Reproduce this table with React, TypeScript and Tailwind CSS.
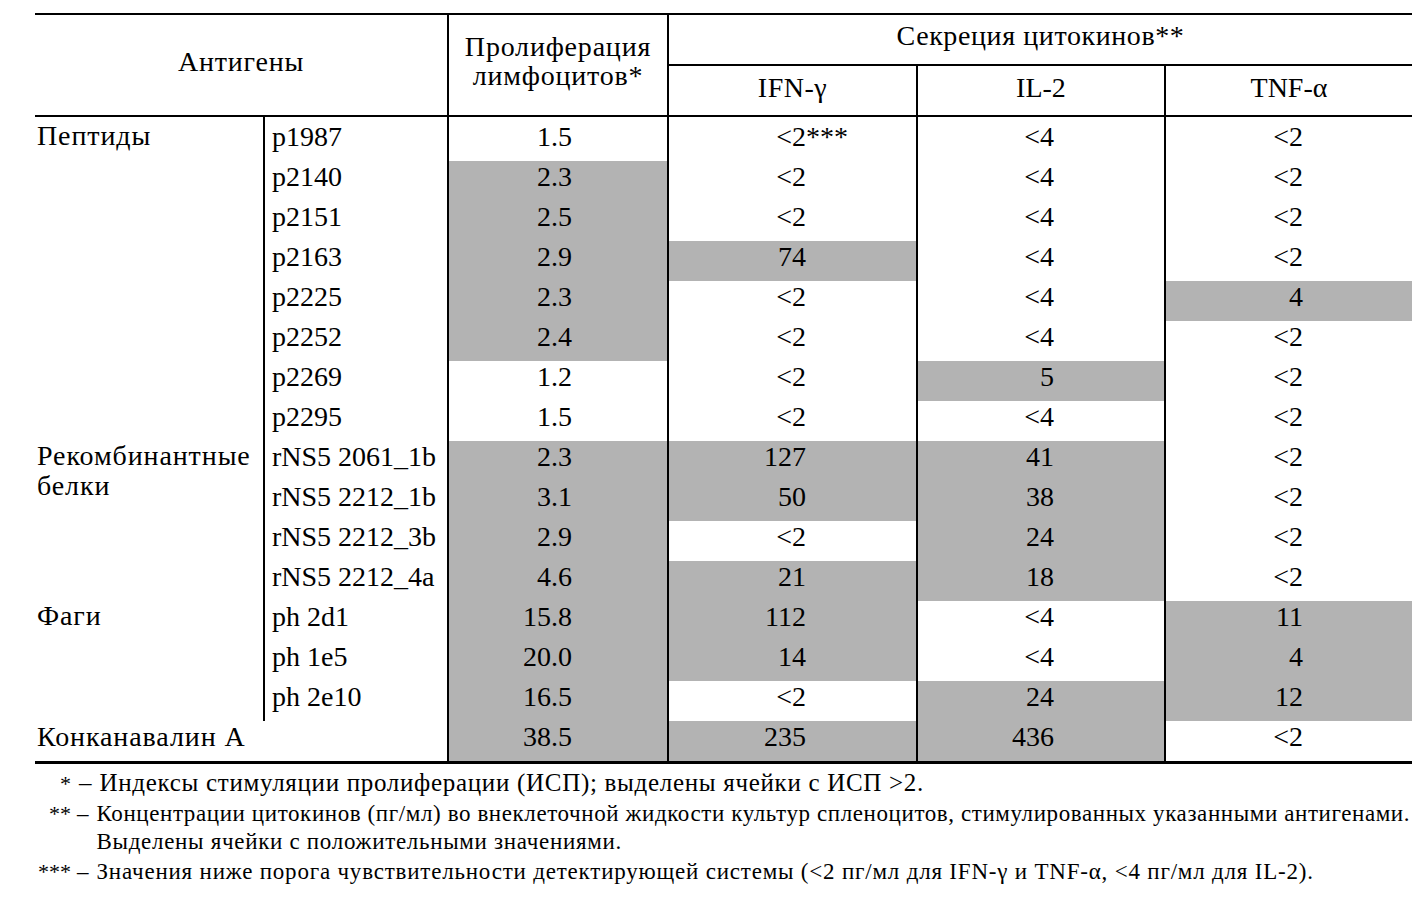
import React from "react";

type Row = {
  group?: string[];
  span?: number;
  name: string;
  full?: boolean;
  v: string[];
  g: number[];
};

const rows: Row[] = [
  { group: ["Пептиды"], span: 8, name: "p1987", v: ["1.5", "<2***", "<4", "<2"], g: [0, 0, 0, 0] },
  { name: "p2140", v: ["2.3", "<2", "<4", "<2"], g: [1, 0, 0, 0] },
  { name: "p2151", v: ["2.5", "<2", "<4", "<2"], g: [1, 0, 0, 0] },
  { name: "p2163", v: ["2.9", "74", "<4", "<2"], g: [1, 1, 0, 0] },
  { name: "p2225", v: ["2.3", "<2", "<4", "4"], g: [1, 0, 0, 1] },
  { name: "p2252", v: ["2.4", "<2", "<4", "<2"], g: [1, 0, 0, 0] },
  { name: "p2269", v: ["1.2", "<2", "5", "<2"], g: [0, 0, 1, 0] },
  { name: "p2295", v: ["1.5", "<2", "<4", "<2"], g: [0, 0, 0, 0] },
  { group: ["Рекомбинантные", "белки"], span: 4, name: "rNS5 2061_1b", v: ["2.3", "127", "41", "<2"], g: [1, 1, 1, 0] },
  { name: "rNS5 2212_1b", v: ["3.1", "50", "38", "<2"], g: [1, 1, 1, 0] },
  { name: "rNS5 2212_3b", v: ["2.9", "<2", "24", "<2"], g: [1, 0, 1, 0] },
  { name: "rNS5 2212_4a", v: ["4.6", "21", "18", "<2"], g: [1, 1, 1, 0] },
  { group: ["Фаги"], span: 3, name: "ph 2d1", v: ["15.8", "112", "<4", "11"], g: [1, 1, 0, 1] },
  { name: "ph 1e5", v: ["20.0", "14", "<4", "4"], g: [1, 1, 0, 1] },
  { name: "ph 2e10", v: ["16.5", "<2", "24", "12"], g: [1, 0, 1, 1] },
  { name: "Конканавалин А", full: true, v: ["38.5", "235", "436", "<2"], g: [1, 1, 1, 0] },
];

const spanClass: Record<number, string> = {
  8: "row-span-8",
  4: "row-span-4",
  3: "row-span-3",
};

const padRight = ["pr-[95px]", "pr-[110px]", "pr-[110px]", "pr-[109px]"];

function Value({ text }: { text: string }) {
  if (text.endsWith("***")) {
    const base = text.slice(0, -3);
    return (
      <span className="relative">
        {base}
        <span className="absolute left-full top-0">***</span>
      </span>
    );
  }
  return <span>{text}</span>;
}

export default function App() {
  return (
    <div className="w-[1427px] h-[905px] bg-white text-black font-['Liberation_Serif','Times_New_Roman',serif] text-[28px] leading-[32px]">
      <div className="pt-[13px] pl-[35px]">
        <div className="w-[1377px]">
          {/* Header */}
          <div className="grid grid-cols-[228px_184px_220px_249px_248px_248px] grid-rows-[51px_49px] border-t-2 border-b-2 border-black box-content">
            <div className="col-span-2 row-span-2 flex items-center justify-center pb-[6px] tracking-[0.8px]">
              Антигены
            </div>
            <div className="row-span-2 border-l-2 border-black flex flex-col items-center justify-center pb-[8px] leading-[29px] tracking-[0.8px]">
              <span>Пролиферация</span>
              <span>лимфоцитов*</span>
            </div>
            <div className="col-span-3 border-l-2 border-b-2 border-black flex items-center justify-center pb-[7px] tracking-[0.6px]">
              Секреция цитокинов**
            </div>
            <div className="border-l-2 border-black flex items-center justify-center pb-[6px] tracking-[0.5px]">IFN-γ</div>
            <div className="border-l-2 border-black flex items-center justify-center pb-[6px]">IL-2</div>
            <div className="border-l-2 border-black flex items-center justify-center pb-[6px]">TNF-α</div>
          </div>

          {/* Body */}
          <div className="grid grid-cols-[228px_184px_220px_249px_248px_248px] grid-rows-[44px_repeat(15,40px)] border-b-[3px] border-black box-content">
            {rows.map((r, i) => {
              const top = i === 0 ? "pt-[4px]" : "pt-0";
              return (
                <React.Fragment key={i}>
                  {r.group && (
                    <div className={`${spanClass[r.span!]} pl-[2px] ${top} leading-[30px] tracking-[0.9px]`}>
                      {r.group.map((g) => (
                        <div key={g}>{g}</div>
                      ))}
                    </div>
                  )}
                  {r.full ? (
                    <div className={`col-span-2 pl-[2px] ${top} tracking-[0.9px]`}>{r.name}</div>
                  ) : (
                    <div className={`border-l-2 border-black pl-[7px] ${top} whitespace-nowrap`}>{r.name}</div>
                  )}
                  {r.v.map((val, j) => (
                    <div
                      key={j}
                      className={`border-l-2 border-black text-right ${padRight[j]} ${top} ${r.g[j] ? "bg-[#b3b3b3]" : "bg-white"}`}
                    >
                      <Value text={val} />
                    </div>
                  ))}
                </React.Fragment>
              );
            })}
          </div>
        </div>
      </div>

      {/* Footnotes */}
      <div className="pl-[35px] pt-[3px] text-[23px] leading-[28px] whitespace-nowrap">
        <div className="flex items-baseline text-[25px] leading-[32px]">
          <span className="w-[36px] text-right text-[22px]">*</span>
          <span className="ml-[8px]">–</span>
          <span className="ml-[8px] tracking-[0.7px]">Индексы стимуляции пролиферации (ИСП); выделены ячейки с ИСП &gt;2.</span>
        </div>
        <div className="flex items-baseline">
          <span className="w-[36px] text-right text-[22px]">**</span>
          <span className="ml-[6px]">–</span>
          <span className="ml-[8px] tracking-[0.6px]">
            Концентрации цитокинов (пг/мл) во внеклеточной жидкости культур спленоцитов, стимулированных указанными антигенами.
            <br />
            <span className="tracking-[0.7px]">Выделены ячейки с положительными значениями.</span>
          </span>
        </div>
        <div className="flex items-baseline mt-[2px]">
          <span className="w-[36px] text-right text-[22px]">***</span>
          <span className="ml-[6px]">–</span>
          <span className="ml-[8px] tracking-[0.8px]">
            Значения ниже порога чувствительности детектирующей системы (&lt;2 пг/мл для IFN-γ и TNF-α, &lt;4 пг/мл для IL-2).
          </span>
        </div>
      </div>
    </div>
  );
}
